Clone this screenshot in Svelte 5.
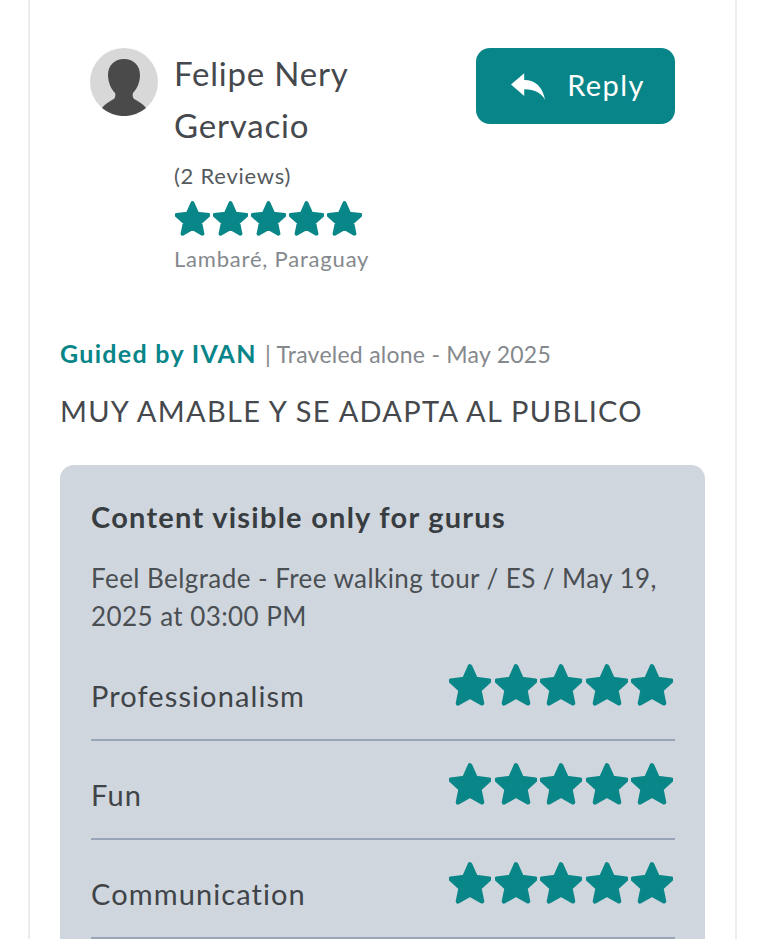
<script>
  const ratings = ['Professionalism', 'Fun', 'Communication'];
  const five = [0, 1, 2, 3, 4];
  const star = 'M12 3.2 L14.7 9.2 L21.2 10 L16.4 14.4 L17.7 20.7 L12 17.5 L6.3 20.7 L7.6 14.4 L2.8 10 L9.3 9.2 Z';
</script>

<main class="page">
  <section class="card">
    <header class="top">
      <div class="person">
        <svg class="avatar" viewBox="0 0 68 68" aria-hidden="true">
          <circle cx="34" cy="34" r="34" fill="#d8d8d8" />
          <path d="M34 11c-9 0-16 6-16 16 0 7 3 14 7 18 1 3 0 6-3 7-3 2-7 4-10 8A34 34 0 0 0 56 60c-3-4-7-6-10-8-3-1-4-4-3-7 4-4 7-11 7-18 0-10-7-16-16-16z" fill="#4a4a4a" />
        </svg>
        <div class="info">
          <h2>Felipe Nery Gervacio</h2>
          <p class="count">(2 Reviews)</p>
          <div class="stars small">
            {#each five as i (i)}
              <svg viewBox="2 2 20 20" aria-hidden="true"><path d={star} /></svg>
            {/each}
          </div>
          <p class="place">Lambaré, Paraguay</p>
        </div>
      </div>
      <button class="reply" type="button">
        <svg viewBox="0 0 36 28" aria-hidden="true">
          <path d="M0 12 14 0v7c12 0 20 8 22 21-4-7-11-11-22-11v7z" fill="#fff" />
        </svg>
        <span>Reply</span>
      </button>
    </header>

    <p class="meta"><strong>Guided by IVAN</strong> | Traveled alone - May 2025</p>
    <p class="quote">MUY AMABLE Y SE ADAPTA AL PUBLICO</p>

    <div class="panel">
      <h3>Content visible only for gurus</h3>
      <p class="tour">Feel Belgrade - Free walking tour / ES / May 19, 2025 at 03:00 PM</p>
      {#each ratings as label (label)}
        <div class="row">
          <span>{label}</span>
          <div class="stars big">
            {#each five as i (i)}
              <svg viewBox="2 2 20 20" aria-hidden="true"><path d={star} /></svg>
            {/each}
          </div>
        </div>
      {/each}
    </div>
  </section>
</main>

<style>
  :global(body) { margin: 0; background: #fff; }
  .page {
    height: 939px;
    overflow: hidden;
    padding: 0 31px 0 28px;
    font-family: Lato, "Noto Sans", sans-serif;
    font-variant-ligatures: none;
    color: #3f4448;
  }
  .card {
    height: 100%;
    border-left: 2px solid #ececec;
    border-right: 2px solid #ececec;
    padding: 48px 30px 0 30px;
    box-sizing: border-box;
  }
  .top {
    display: flex;
    justify-content: space-between;
    align-items: flex-start;
    padding: 0 30px 0 30px;
  }
  .person { display: flex; gap: 16px; }
  .avatar { width: 68px; height: 68px; flex: none; }
  .info { width: 200px; }
  h2 {
    margin: -1px 0 0;
    font-size: 33px;
    font-weight: 400;
    line-height: 52px;
    letter-spacing: 0.8px;
    color: #45494d;
  }
  .count { margin: 10px 0 0; font-size: 22px; line-height: 30px; letter-spacing: 0.75px; color: #555a5e; }
  .stars { display: flex; }
  .stars svg { fill: #088688; stroke: #088688; stroke-linejoin: round; stroke-width: 2.2; display: block; flex: none; }
  .stars.small { gap: 3px; margin-top: 10px; margin-left: 1px; }
  .stars.small svg { width: 35px; height: 35px; }
  .place { margin: 8px 0 0; font-size: 22px; line-height: 30px; letter-spacing: 0.8px; color: #85898d; }
  .reply {
    width: 199px;
    height: 76px;
    border: 0;
    border-radius: 14px;
    background: #088588;
    color: #fff;
    display: flex;
    align-items: center;
    justify-content: center;
    gap: 22px;
    font: inherit;
    font-size: 29px;
    letter-spacing: 1.4px;
    padding: 0 0 0 5px;
  }
  .reply span { padding-bottom: 3px; }
  .reply svg { width: 34px; height: 27px; }
  .meta { margin: 63px 0 0; font-size: 23px; line-height: 32px; letter-spacing: 0.25px; color: #85898d; }
  .meta strong { color: #088588; font-size: 25px; font-weight: 700; letter-spacing: 1.3px; margin-right: 2px; }
  .quote { margin: 21px 0 0; font-size: 29px; line-height: 40px; letter-spacing: 1.3px; color: #45494d; }
  .panel {
    margin-top: 34px;
    background: #d0d6dd;
    border-radius: 14px 14px 0 0;
    padding: 31px 30px 0 31px;
    height: 600px;
  }
  h3 { margin: 0; font-size: 29px; line-height: 42px; font-weight: 700; letter-spacing: 1.25px; color: #383d42; }
  .tour { margin: 20.5px 0 7.5px; font-size: 26px; line-height: 38px; letter-spacing: 0.43px; color: #4a4f54; }
  .row {
    height: 99px;
    box-sizing: border-box;
    border-bottom: 2px solid #98a5b7;
    display: flex;
    justify-content: space-between;
    align-items: flex-start;
  }
  .row span { font-size: 29px; line-height: 40px; letter-spacing: 1.1px; margin-top: 34px; }
  .stars.big { gap: 3.5px; margin-top: 22px; margin-right: 2px; }
  .stars.big svg { width: 42px; height: 42px; }
</style>
